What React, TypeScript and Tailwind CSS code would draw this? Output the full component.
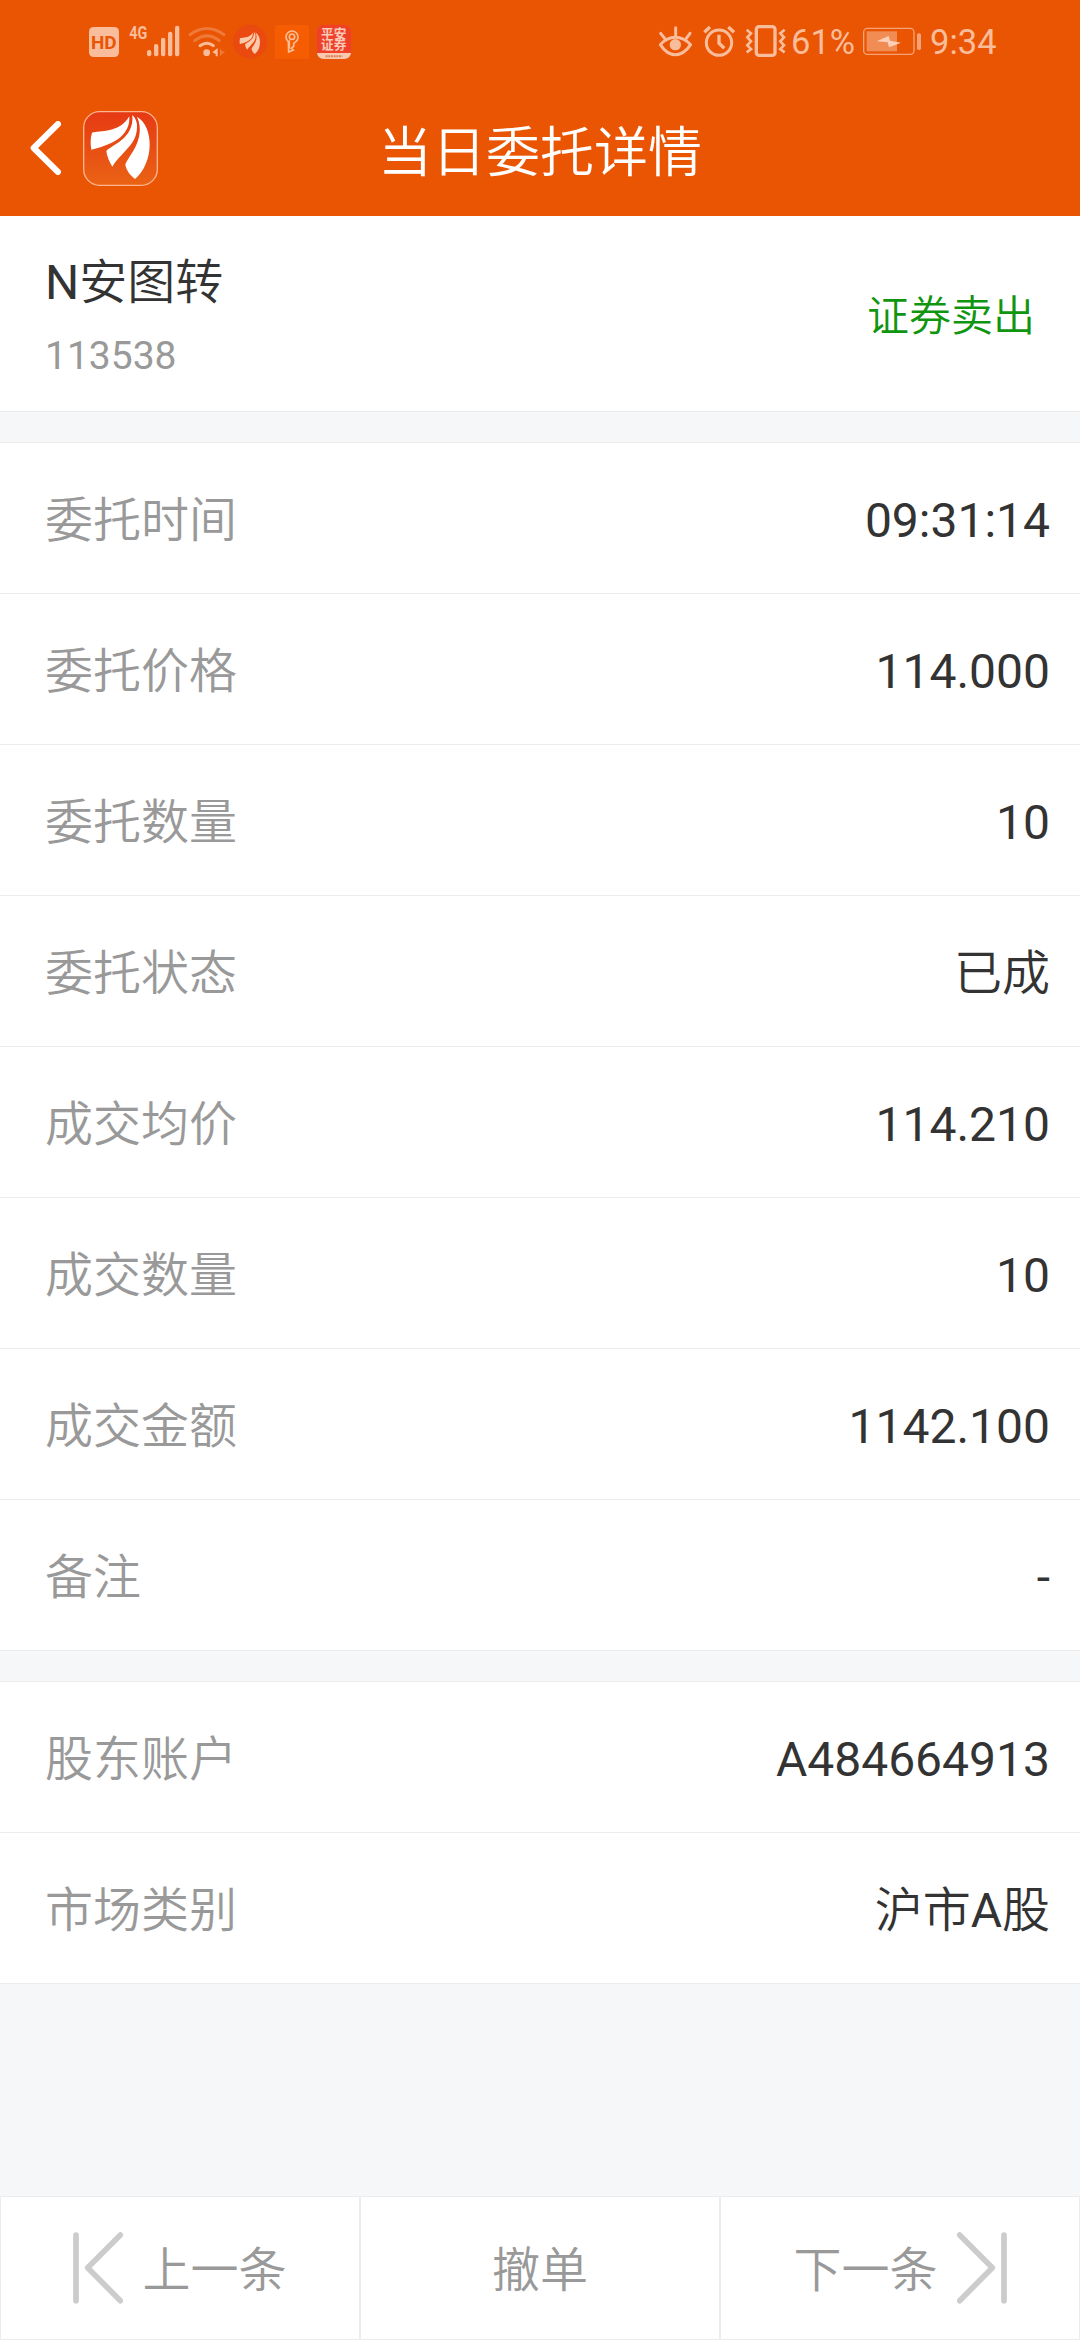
import { Fragment } from 'react';

interface Field {
  label: string;
  value: string;
}

const orderFields: Field[] = [
  { label: '委托时间', value: '09:31:14' },
  { label: '委托价格', value: '114.000' },
  { label: '委托数量', value: '10' },
  { label: '委托状态', value: '已成' },
  { label: '成交均价', value: '114.210' },
  { label: '成交数量', value: '10' },
  { label: '成交金额', value: '1142.100' },
  { label: '备注', value: '-' },
];

const accountFields: Field[] = [
  { label: '股东账户', value: 'A484664913' },
  { label: '市场类别', value: '沪市A股' },
];

// Chinese runs are set lighter than latin letters and digits
function Mixed({ text }: { text: string }) {
  const parts = text.split(/([\u4e00-\u9fff]+)/).filter(Boolean);
  return (
    <>
      {parts.map((part, i) =>
        /[\u4e00-\u9fff]/.test(part) ? (
          <span key={i} className="font-[350]">{part}</span>
        ) : (
          <Fragment key={i}>{part}</Fragment>
        )
      )}
    </>
  );
}

function Swoosh() {
  return (
    <>
      <path d="M276 128C300 122 358 130 388 79C391 130 352 162 274 179Q269 152 276 128Z" />
      <path d="M397 75Q412 88 411 112C410 165 370 180 337 230Q322 206 319 184C325 168 404 150 397 75Z" />
      <path d="M411 80C462 110 464 216 405 267Q381 249 376 225C378 205 442 150 411 80Z" />
    </>
  );
}

function StatusBar() {
  return (
    <div className="flex h-20 items-center pl-[89px] pt-0.5 text-[#f9bd9b]">
      <svg width="37" height="40" viewBox="57 60 111 120" fill="currentColor">
        <rect x="57" y="78" width="90" height="90" rx="14" />
        <text x="63" y="144" fontSize="57" fontWeight="700" fontFamily="Roboto, sans-serif" fill="#ea5504" textLength="77" lengthAdjust="spacingAndGlyphs">HD</text>
      </svg>
      <svg width="59" height="40" viewBox="168 60 177 120" fill="currentColor">
        <text x="178" y="114" fontSize="56" fontWeight="700" fontFamily="Roboto, sans-serif" textLength="54" lengthAdjust="spacingAndGlyphs">4G</text>
        <rect x="231" y="147" width="13" height="19" rx="6" />
        <rect x="252" y="129" width="13" height="37" rx="6" />
        <rect x="273" y="110" width="13" height="56" rx="6" />
        <rect x="294" y="92" width="13" height="74" rx="6" />
        <rect x="315" y="74" width="13" height="92" rx="6" />
      </svg>
      <svg width="45" height="40" viewBox="345 60 135 120" fill="none" stroke="currentColor" strokeWidth="9" strokeLinecap="round">
        <path d="M360 101Q411 64 462 101" opacity="0.35" />
        <path d="M374 119Q411 90 448 119" opacity="0.35" />
        <path d="M390 134Q411 119 430 134" />
        <circle cx="410" cy="155" r="10" fill="currentColor" stroke="none" />
        <path d="M443 141V166H437V159L427 154Z" fill="currentColor" stroke="none" />
        <path d="M450 141V166L458 158L465 151H456Z" fill="currentColor" stroke="none" opacity="0.35" />
      </svg>
      <svg width="40" height="40" viewBox="480 60 120 120">
        <circle cx="540" cy="122" r="51" fill="#ea4a10" />
        <g transform="translate(415 67) scale(0.345)" fill="#fcc9ac">
          <Swoosh />
        </g>
      </svg>
      <svg width="43" height="40" viewBox="600 60 129 120" fill="none">
        <rect x="614" y="72" width="103" height="102" rx="6" fill="#f65c02" />
        <g stroke="#fbbd95" strokeWidth="5">
          <path d="M655 122A18 18 0 1 1 676 123L671 128V136L664 142L670 147L656 153Z" />
          <circle cx="666" cy="107" r="8" />
          <path d="M658 118V143" />
        </g>
      </svg>
      <svg width="40" height="40" viewBox="729 60 120 120">
        <rect x="741" y="72" width="102" height="102" rx="20" fill="#ef4129" />
        <path d="M741 156H843A20 18 0 0 1 823 174H761A20 18 0 0 1 741 156Z" fill="#f8c9ae" />
        <text fill="#fbcab9" fontSize="38" fontWeight="700" fontFamily="'Noto Sans CJK SC', sans-serif">
          <tspan x="753" y="110">平安</tspan>
          <tspan x="753" y="145">证券</tspan>
        </text>
        <path d="M767 166H817" stroke="#d9825c" strokeWidth="6" strokeDasharray="6 2" />
      </svg>

      <svg className="ml-auto" width="40" height="40" viewBox="48 60 120 120" fill="none" stroke="currentColor" strokeWidth="9" strokeLinecap="round" strokeLinejoin="round">
        <path d="M61 131Q81 109 106 109T152 131Q132 161 106 161T61 131Z" />
        <circle cx="106" cy="131" r="17" fill="currentColor" stroke="none" />
        <path d="M107 80V104M62 97L74 112M150 97L139 112" />
      </svg>
      <svg width="44" height="40" viewBox="168 60 132 120" fill="none" stroke="currentColor" strokeWidth="9">
        <circle cx="237" cy="125" r="38" />
        <path d="M237 101V127L253 142" strokeWidth="10" />
        <path d="M193 94L210 78M265 78L282 94" strokeWidth="10" />
      </svg>
      <svg width="51" height="40" viewBox="300 60 153 120" fill="none" stroke="currentColor" strokeWidth="10">
        <rect x="349" y="77" width="56" height="86" rx="8" />
        <path d="M320 86L333 97L322 109L333 121L322 133L333 144L320 154M434 86L421 97L432 109L421 121L432 133L421 144L434 154" strokeWidth="8" />
      </svg>
      <span className="w-[69px] pt-0.5 text-[34.5px] leading-10">61%</span>
      <svg width="64" height="40" viewBox="660 60 192 120" fill="none">
        <rect x="671" y="82" width="151" height="78" rx="11" stroke="#f5a276" strokeWidth="4" />
        <rect x="680" y="91" width="91" height="60" fill="#f18c54" />
        <rect x="831" y="97" width="12" height="50" rx="5" fill="#f5a276" />
        <path d="M710 121L746 105L750 119L783 125L747 139L743 124Z" fill="#fbd0b7" />
      </svg>
      <span className="ml-1.5 mr-[83px] w-[67px] pt-0.5 text-[34.5px] leading-10">9:34</span>
    </div>
  );
}

function TitleBar() {
  return (
    <div className="grid h-[136px] grid-cols-[1fr_auto_1fr] items-center text-white">
      <div className="flex items-center gap-[22px] pl-[30px]">
        <svg width="31" height="54" viewBox="90 93 93 162" fill="none" stroke="currentColor" strokeWidth="18" strokeLinecap="round" strokeLinejoin="round">
          <path d="M174 102L101 174L174 246" />
        </svg>
        <svg width="75" height="75" viewBox="249 63 225 225" fill="currentColor">
          <defs>
            <linearGradient id="logo" x1="0" y1="0" x2="0" y2="1">
              <stop offset="0" stopColor="#e63914" />
              <stop offset="1" stopColor="#ea6314" />
            </linearGradient>
          </defs>
          <rect x="251" y="65" width="221" height="221" rx="48" fill="url(#logo)" stroke="#fbb590" strokeWidth="4" />
          <Swoosh />
        </svg>
      </div>
      <h1 className="pt-3 text-[54px] font-[350] leading-[80px]">当日委托详情</h1>
    </div>
  );
}

function FieldList({ fields }: { fields: Field[] }) {
  return (
    <div className="mt-[30px] border-t border-[#ebecee] bg-white">
      {fields.map(field => (
        <div
          key={field.label}
          className="flex h-[151px] items-center justify-between border-b border-[#ebecee] pl-[45px] pr-[30px] pt-[5px] text-[48px] leading-[70px]"
        >
          <span className="text-[#999]">
            <Mixed text={field.label} />
          </span>
          <span className="text-[#333]">
            <Mixed text={field.value} />
          </span>
        </div>
      ))}
    </div>
  );
}

function StepIcon({ className = '' }: { className?: string }) {
  return (
    <svg className={className} width="50" height="72" viewBox="222 215 150 216" fill="none" stroke="#ccc" strokeWidth="17" strokeLinecap="round" strokeLinejoin="round">
      <path d="M231 224V421M364 224L266 322L364 421" />
    </svg>
  );
}

export default function App() {
  return (
    <div className="flex h-[2340px] w-[1080px] flex-col overflow-hidden bg-[#f6f7f9] font-['Roboto','Noto_Sans_CJK_SC',sans-serif]">
      <header className="bg-[#ea5504]">
        <StatusBar />
        <TitleBar />
      </header>

      <section className="flex h-[196px] items-center justify-between border-b border-[#ebecee] bg-white px-[45px]">
        <div className="pt-[11px]">
          <div className="text-[48px] leading-[70px] text-[#333]">
            <Mixed text="N安图转" />
          </div>
          <div className="mt-[3px] text-[39px] leading-[70px] text-[#999]">113538</div>
        </div>
        <div className="pt-1.5 text-[42px] font-[350] leading-[60px] text-[#109510]">证券卖出</div>
      </section>

      <FieldList fields={orderFields} />
      <FieldList fields={accountFields} />

      <footer className="mt-auto grid h-36 grid-cols-3 text-[48px] font-[350] leading-[70px] text-[#999]">
        <button className="flex items-center justify-center gap-[19px] border border-[#ebecee] bg-white">
          <StepIcon />
          <span className="pt-[5px]">上一条</span>
        </button>
        <button className="border border-[#ebecee] bg-white pt-[5px]">撤单</button>
        <button className="flex items-center justify-center gap-[19px] border border-[#ebecee] bg-white">
          <span className="pt-[5px]">下一条</span>
          <StepIcon className="-scale-x-100" />
        </button>
      </footer>
    </div>
  );
}
